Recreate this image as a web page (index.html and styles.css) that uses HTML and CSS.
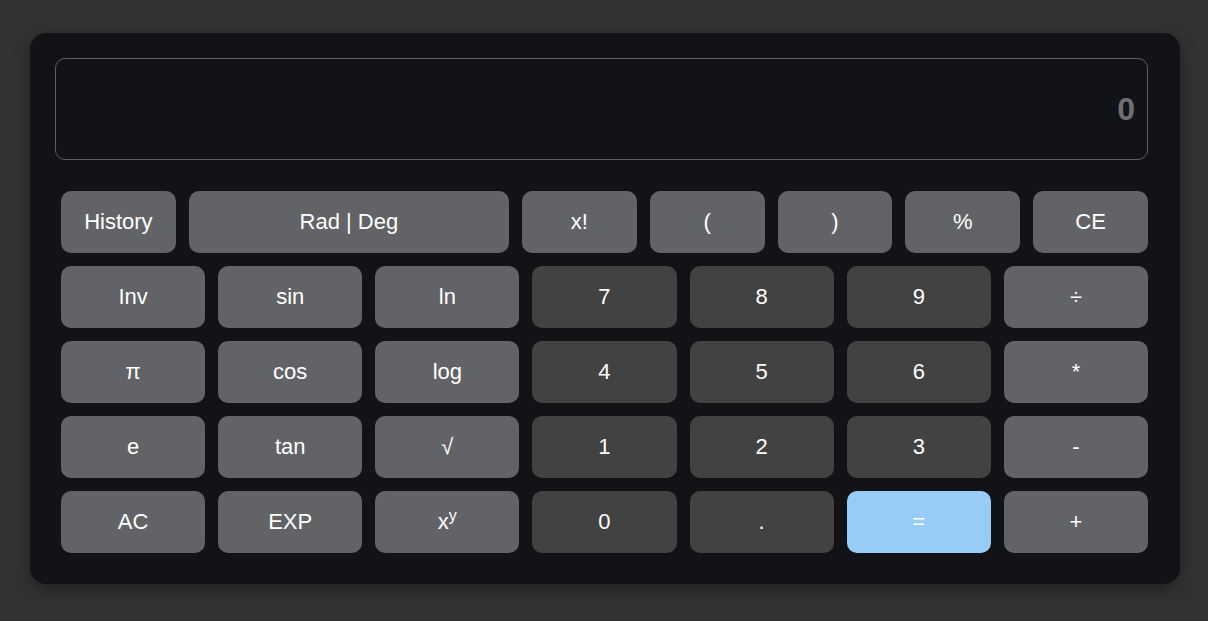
FILE: index.html
```html
<!DOCTYPE html>
<html lang="en">
<head>
<meta charset="utf-8">
<title>Calculator</title>
<link rel="stylesheet" href="styles.css">
</head>
<body>
<div class="calc">
  <div class="display"><span class="value">0</span></div>
  <div class="keys">
    <div class="row row-top">
      <button class="key fn">History</button>
      <button class="key fn">Rad | Deg</button>
      <button class="key fn">x!</button>
      <button class="key fn">(</button>
      <button class="key fn">)</button>
      <button class="key fn">%</button>
      <button class="key fn">CE</button>
    </div>
    <div class="row">
      <button class="key fn">Inv</button>
      <button class="key fn">sin</button>
      <button class="key fn">ln</button>
      <button class="key num">7</button>
      <button class="key num">8</button>
      <button class="key num">9</button>
      <button class="key fn">÷</button>
    </div>
    <div class="row">
      <button class="key fn">π</button>
      <button class="key fn">cos</button>
      <button class="key fn">log</button>
      <button class="key num">4</button>
      <button class="key num">5</button>
      <button class="key num">6</button>
      <button class="key fn">*</button>
    </div>
    <div class="row">
      <button class="key fn">e</button>
      <button class="key fn">tan</button>
      <button class="key fn">√</button>
      <button class="key num">1</button>
      <button class="key num">2</button>
      <button class="key num">3</button>
      <button class="key fn">-</button>
    </div>
    <div class="row">
      <button class="key fn">AC</button>
      <button class="key fn">EXP</button>
      <button class="key fn">x<sup>y</sup></button>
      <button class="key num">0</button>
      <button class="key num">.</button>
      <button class="key eq">=</button>
      <button class="key fn">+</button>
    </div>
  </div>
</div>
</body>
</html>
```

FILE: styles.css
```css
* { box-sizing: border-box; }

html, body {
  margin: 0;
  height: 100%;
  background: #323232;
  font-family: "Liberation Sans", Arial, sans-serif;
}

body {
  padding: 33px 28px 0 30px;
}

.calc {
  width: 1150px;
  height: 551px;
  background: #121317;
  border-radius: 16px;
  padding: 25px 32px 31px 25px;
  box-shadow: 0 5px 15px rgba(0, 0, 0, 0.35);
}

.display {
  height: 102px;
  border: 1px solid #5d5f64;
  border-radius: 10px;
  display: flex;
  align-items: center;
  justify-content: flex-end;
  padding-right: 12px;
}

.value {
  font-size: 32px;
  font-weight: bold;
  color: #6e7075;
}

.keys {
  margin: 31px 0 0 6px;
  width: 1087px;
  display: flex;
  flex-direction: column;
  gap: 13px;
}

.row {
  display: grid;
  grid-template-columns: repeat(7, 1fr);
  gap: 13px;
}

.row-top {
  grid-template-columns: 1fr 2.789fr repeat(5, 1fr);
}

.key {
  height: 62px;
  border: none;
  border-radius: 10px;
  font-family: "Liberation Sans", Arial, sans-serif;
  font-size: 22px;
  color: #ffffff;
  padding: 0;
  cursor: pointer;
}

.key sup {
  font-size: 16px;
  vertical-align: 8px;
  line-height: 0;
}

.fn { background: #626367; }
.num { background: #424242; }
.eq { background: #98cbf5; }
```
